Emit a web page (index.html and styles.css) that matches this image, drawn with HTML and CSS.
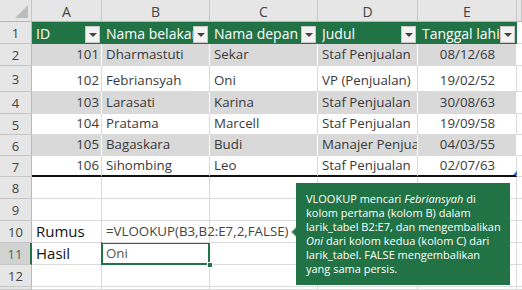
FILE: index.html
```html
<!DOCTYPE html>
<html>
<head>
<meta charset="utf-8">
<link rel="stylesheet" href="styles.css">
</head>
<body>
<div class="sheet">
  <div class="corner"><span class="tri"></span></div>
  <div class="ch">A</div><div class="ch">B</div><div class="ch">C</div><div class="ch">D</div><div class="ch">E</div><div class="ch"></div>

  <div class="rh">1</div>
  <div class="th"><span class="lbl">ID</span><span class="dd"></span></div>
  <div class="th"><span class="lbl">Nama belakang</span><span class="dd"></span></div>
  <div class="th"><span class="lbl">Nama depan</span><span class="dd"></span></div>
  <div class="th"><span class="lbl">Judul</span><span class="dd"></span></div>
  <div class="th"><span class="lbl">Tanggal lahir</span><span class="dd"></span></div>
  <div class="c"></div>

  <div class="rh">2</div>
  <div class="c b num">101</div><div class="c b">Dharmastuti</div><div class="c b">Sekar</div><div class="c b">Staf Penjualan</div><div class="c b ctr">08/12/68</div><div class="c"></div>

  <div class="rh">3</div>
  <div class="c num">102</div><div class="c">Febriansyah</div><div class="c">Oni</div><div class="c">VP (Penjualan)</div><div class="c ctr">19/02/52</div><div class="c"></div>

  <div class="rh">4</div>
  <div class="c b num">103</div><div class="c b">Larasati</div><div class="c b">Karina</div><div class="c b">Staf Penjualan</div><div class="c b ctr">30/08/63</div><div class="c"></div>

  <div class="rh">5</div>
  <div class="c num">104</div><div class="c">Pratama</div><div class="c">Marcell</div><div class="c">Staf Penjualan</div><div class="c ctr">19/09/58</div><div class="c"></div>

  <div class="rh">6</div>
  <div class="c b num">105</div><div class="c b">Bagaskara</div><div class="c b">Budi</div><div class="c b">Manajer Penjualan</div><div class="c b ctr">04/03/55</div><div class="c"></div>

  <div class="rh">7</div>
  <div class="c last num">106</div><div class="c last">Sihombing</div><div class="c last">Leo</div><div class="c last">Staf Penjualan</div><div class="c last ctr corner-cell">02/07/63<span class="rsz"></span></div><div class="c"></div>

  <div class="rh">8</div>
  <div class="c"></div><div class="c"></div><div class="c"></div><div class="c"></div><div class="c"></div><div class="c"></div>

  <div class="rh">9</div>
  <div class="c"></div><div class="c"></div><div class="c"></div><div class="c"></div><div class="c"></div><div class="c"></div>

  <div class="rh">10</div>
  <div class="c dark">Rumus</div><div class="c formula">=VLOOKUP(B3,B2:E7,2,FALSE)</div><div class="c"></div><div class="c"></div><div class="c"></div><div class="c"></div>

  <div class="rh active">11</div>
  <div class="c dark">Hasil</div><div class="c sel">Oni<span class="handle"></span></div><div class="c"></div><div class="c"></div><div class="c"></div><div class="c"></div>

  <div class="rh">12</div>
  <div class="c"></div><div class="c"></div><div class="c"></div><div class="c"></div><div class="c"></div><div class="c"></div>

  <div class="rh"></div>
  <div class="c"></div><div class="c"></div><div class="c"></div><div class="c"></div><div class="c"></div><div class="c"></div>
</div>

<div class="callout">
  <span class="ptr"></span>
  <p>VLOOKUP mencari <i>Febriansyah</i> di<br>kolom pertama (kolom B) dalam<br>larik_tabel B2:E7, dan mengembalikan<br><i>Oni</i> dari kolom kedua (kolom C) dari<br>larik_tabel. FALSE mengembalikan<br>yang sama persis.</p>
</div>
</body>
</html>
```

FILE: styles.css
```css
* { box-sizing: border-box; margin: 0; padding: 0; }

body {
  width: 522px;
  height: 290px;
  overflow: hidden;
  background: #fff;
  font-family: "Open Sans", "Noto Sans", sans-serif;
  position: relative;
}

.sheet {
  display: grid;
  grid-template-columns: 32px 70px 108px 108px 100px 99px 5px;
  grid-template-rows: 22px 22px 22px 26px 22px 21px 21px 21px 22px 22px 22px 22px 22px 3px;
}

.corner {
  background: #e6e6e6;
  border-right: 1px solid #c6c6c6;
  border-bottom: 1px solid #b8b8b8;
  position: relative;
}
.tri {
  position: absolute;
  right: 3px;
  bottom: 3px;
  width: 0;
  height: 0;
  border-left: 13px solid transparent;
  border-bottom: 13px solid #bdbdbd;
}

.ch {
  background: #e6e6e6;
  border-right: 1px solid #c6c6c6;
  border-bottom: 1px solid #b8b8b8;
  color: #444;
  font-size: 14px;
  display: flex;
  align-items: center;
  justify-content: center;
  padding-top: 1px;
}

.rh {
  background: #e6e6e6;
  border-right: 1px solid #b8b8b8;
  border-bottom: 1px solid #c6c6c6;
  color: #444;
  font-size: 13px;
  display: flex;
  align-items: center;
  justify-content: center;
  padding-top: 1px;
}
.rh.active {
  background: #d2d2d2;
  border-right: 2px solid #217346;
  color: #3d6e4e;
}

.th {
  background: #217346;
  color: #fff;
  font-size: 14px;
  display: flex;
  align-items: center;
  padding: 0 2px 0 4px;
  border-bottom: 1px solid #217346;
  overflow: hidden;
  white-space: nowrap;
}
.th .lbl {
  flex: 1;
  overflow: hidden;
  padding-top: 1px;
}
.dd {
  flex: none;
  width: 15px;
  height: 17px;
  margin-top: 3px;
  background: #f2f2f2;
  border: 1px solid #c9c9c9;
  display: flex;
  align-items: center;
  justify-content: center;
}
.dd::after {
  content: "";
  width: 0;
  height: 0;
  border-left: 4px solid transparent;
  border-right: 4px solid transparent;
  border-top: 4px solid #444;
  margin-top: 2px;
}

.c {
  border-right: 1px solid #dadada;
  border-bottom: 1px solid #dadada;
  display: flex;
  align-items: flex-end;
  padding: 0 3px 2px 4px;
  font-size: 13.3px;
  line-height: 18px;
  color: #3a3a3a;
  white-space: nowrap;
  overflow: hidden;
}
.c.b {
  background: #d9d9d9;
  border-right-color: #fff;
  border-bottom-color: #d9d9d9;
}
.c.num { justify-content: flex-end; padding-right: 2px; }
.c.ctr { justify-content: center; }
.c.last { border-bottom: 2px solid #111; padding-bottom: 1px; }
.c.dark { color: #111; font-size: 15px; }
.c.formula { overflow: visible; color: #444; position: relative; z-index: 1; }

.corner-cell { position: relative; overflow: visible; }
.rsz {
  position: absolute;
  right: -1px;
  bottom: 0;
  width: 0;
  height: 0;
  border-left: 4px solid transparent;
  border-bottom: 4px solid #3b6fc9;
}

.sel {
  position: relative;
  overflow: visible;
  color: #555;
}
.sel::before {
  content: "";
  position: absolute;
  left: -1px;
  top: -1px;
  right: -1px;
  bottom: -1px;
  border: 2px solid #217346;
}
.handle {
  position: absolute;
  right: -4px;
  bottom: -4px;
  width: 6px;
  height: 6px;
  background: #217346;
  border: 1px solid #fff;
  z-index: 2;
}

.callout {
  position: absolute;
  left: 296px;
  top: 183px;
  width: 214px;
  height: 102px;
  background: #217346;
  color: #fff;
  padding: 9px 6px 0 10px;
  z-index: 3;
}
.callout p {
  font-size: 11px;
  line-height: 14px;
  white-space: nowrap;
}
.ptr {
  position: absolute;
  left: -6px;
  top: 43px;
  width: 0;
  height: 0;
  border-top: 6px solid transparent;
  border-bottom: 6px solid transparent;
  border-right: 6px solid #cfd8d2;
}
.ptr::after {
  content: "";
  position: absolute;
  left: 2px;
  top: -5px;
  width: 0;
  height: 0;
  border-top: 5px solid transparent;
  border-bottom: 5px solid transparent;
  border-right: 5px solid #217346;
}
```
